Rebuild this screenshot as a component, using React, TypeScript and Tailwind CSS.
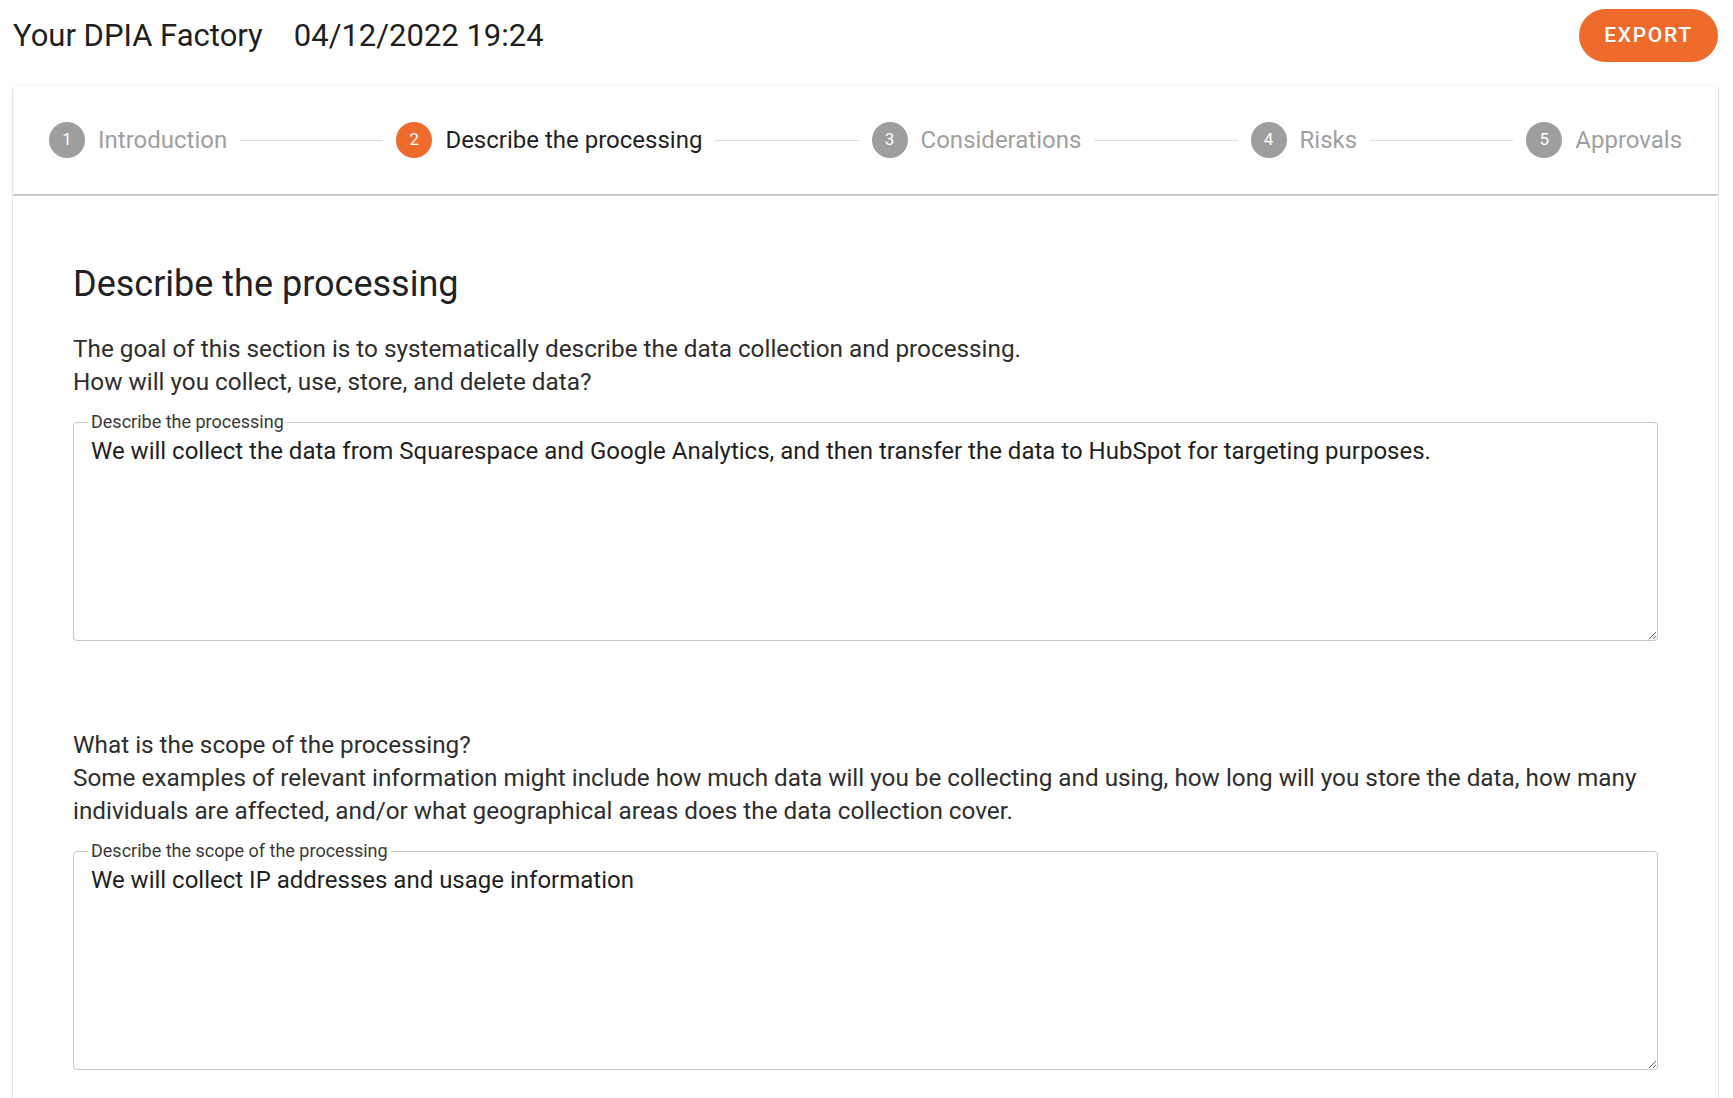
import React from "react";

const steps = [
  { n: 1, label: "Introduction" },
  { n: 2, label: "Describe the processing" },
  { n: 3, label: "Considerations" },
  { n: 4, label: "Risks" },
  { n: 5, label: "Approvals" },
];

const ACTIVE = 2;

function Step({ n, label }: { n: number; label: string }) {
  const active = n === ACTIVE;
  return (
    <div className="flex items-center shrink-0">
      <span
        className={
          active
            ? "flex h-[36px] w-[36px] items-center justify-center rounded-full bg-[#ee6b2b] text-[17px] text-white"
            : "flex h-[36px] w-[36px] items-center justify-center rounded-full bg-[#9e9e9e] text-[17px] text-white"
        }
      >
        {n}
      </span>
      <span
        className={
          active
            ? "ml-[13px] text-[24px] text-[#1f1f1f]"
            : "ml-[13px] text-[24px] text-[#a0a0a0]"
        }
      >
        {label}
      </span>
    </div>
  );
}

function TextField({ label, value }: { label: string; value: string }) {
  return (
    <fieldset className="rounded-[4px] border border-[#c8c8c8] p-0">
      <legend className="ml-[14px] px-[3px] text-[18px] leading-[22px] text-[#3a3a3a]">
        {label}
      </legend>
      <textarea
        defaultValue={value}
        className="block h-[207px] w-full resize-y px-[17px] pt-[2px] text-[24px] leading-[32px] text-[#1f1f1f] outline-none"
      />
    </fieldset>
  );
}

export default function App() {
  return (
    <div className="min-h-screen bg-white font-['Roboto',sans-serif]">
      <header className="flex items-center justify-between pl-[13px] pr-[15px] pt-[9px]">
        <div className="flex items-center gap-[31px] text-[31px] leading-[40px] text-[#1f1f1f]">
          <span>Your DPIA Factory</span>
          <span>04/12/2022 19:24</span>
        </div>
        <button
          type="button"
          className="h-[53px] w-[139px] rounded-full bg-[#ee6b2b] text-[21px] font-medium tracking-[0.08em] text-white"
        >
          EXPORT
        </button>
      </header>

      <div className="ml-[13px] mr-[15px] mt-[24px] flex h-[108px] items-center bg-white px-[36px] shadow-[0_2px_2px_rgba(0,0,0,0.25),0_0_3px_rgba(0,0,0,0.08)]">
        {steps.map((s, i) => (
          <React.Fragment key={s.n}>
            {i > 0 && <div className="mx-[13px] h-px flex-1 bg-[#dcdcdc]" />}
            <Step n={s.n} label={s.label} />
          </React.Fragment>
        ))}
      </div>

      <main className="ml-[12px] mr-[14px] mt-[2px] min-h-[920px] border-x border-[#e6e6e6] bg-white px-[60px] pt-[66px]">
        <h2 className="text-[36px] leading-[44px] text-[#222]">
          Describe the processing
        </h2>
        <p className="mt-[26px] text-[24.3px] leading-[33px] text-[#2e2e2e]">
          The goal of this section is to systematically describe the data
          collection and processing.
          <br />
          How will you collect, use, store, and delete data?
        </p>
        <div className="mt-[13px]">
          <TextField
            label="Describe the processing"
            value="We will collect the data from Squarespace and Google Analytics, and then transfer the data to HubSpot for targeting purposes."
          />
        </div>

        <p className="mt-[87px] text-[24.3px] leading-[33px] text-[#2e2e2e]">
          What is the scope of the processing?
          <br />
          Some examples of relevant information might include how much data
          will you be collecting and using, how long will you store the data,
          how many individuals are affected, and/or what geographical areas
          does the data collection cover.
        </p>
        <div className="mt-[13px]">
          <TextField
            label="Describe the scope of the processing"
            value="We will collect IP addresses and usage information"
          />
        </div>
      </main>
    </div>
  );
}
